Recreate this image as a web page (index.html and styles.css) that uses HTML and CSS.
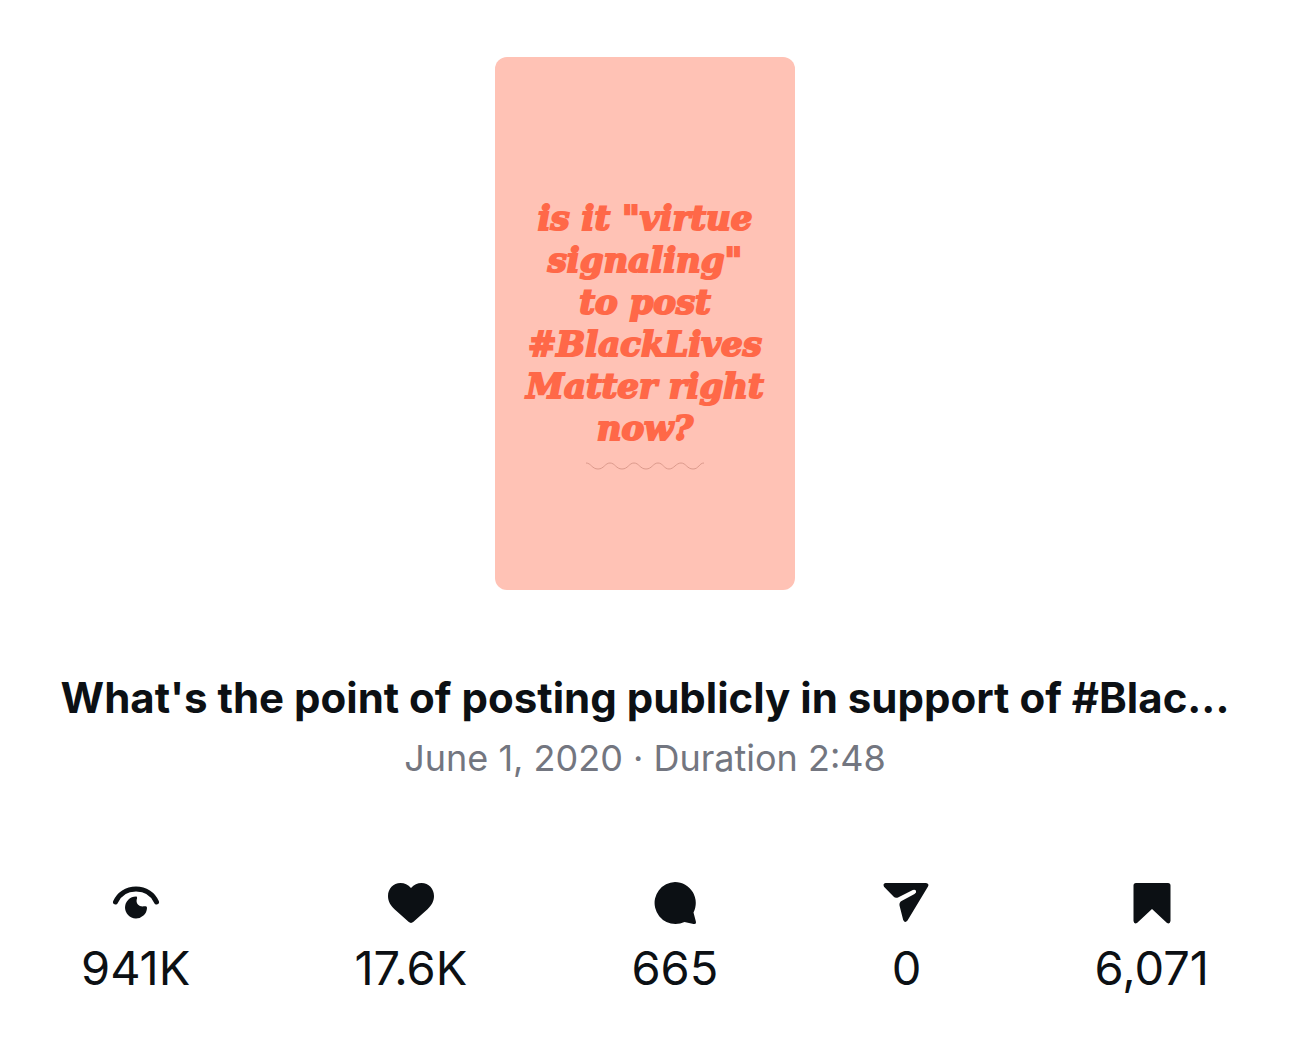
FILE: index.html
```html
<!DOCTYPE html>
<html lang="en">
<head>
  <meta charset="utf-8">
  <meta name="viewport" content="width=device-width, initial-scale=1">
  <title>Video insights</title>
  <link rel="stylesheet" href="styles.css">
</head>
<body>
  <main class="insights">
    <figure class="cover">
      <p class="cover-text">is it "virtue<br>signaling"<br>to post<br>#BlackLives<br>Matter right<br>now?</p>
      <svg class="cover-wave" viewBox="0 0 120 10" aria-hidden="true">
        <path d="M1 2C6 2 7 8 13 8S20 2 25 2S31 8 37 8S44 2 49 2S55 8 61 8S68 2 73 2S79 8 84 8S91 2 96 2S102 8 108 8S114 2 119 2"/>
      </svg>
    </figure>
    <header class="summary">
      <h1 class="title">What's the point of posting publicly in support of #Blac...</h1>
      <p class="meta">June 1, 2020 · Duration 2:48</p>
    </header>
    <ul class="stats">
      <li class="stat">
        <svg class="icon" viewBox="0 0 48 48" role="img" aria-label="Views">
          <path class="stroke" d="M3.500 22C7 14 14.500 9 24 9S41 14 44.500 22"/>
          <path d="M24 16.500C25 16 25.500 17.500 24.700 19.500C23.800 23.500 27 26.500 30.500 26.500C33 26.300 35 26 35 28A11 11 0 1 1 24 16.500Z"/>
        </svg>
        <span>941K</span>
      </li>
      <li class="stat">
        <svg class="icon" viewBox="0 0 48 48" role="img" aria-label="Likes">
          <path d="M24 8C27 4.500 30.500 3 34.500 3C41.800 3 47 8.800 47 16C47 21.500 44.500 25.500 40.500 29.200L26.500 41.800Q24 44 21.500 41.800L7.500 29.200C3.500 25.500 1 21.500 1 16C1 8.800 6.200 3 13.500 3C17.500 3 21 4.500 24 8Z"/>
        </svg>
        <span>17.6K</span>
      </li>
      <li class="stat">
        <svg class="icon" viewBox="0 0 48 48" role="img" aria-label="Comments">
          <path d="M24 2A21 21 0 1 0 33.500 42L42.500 44Q45.700 44.500 44.800 41.200L42.500 32.500A21 21 0 0 0 24 2Z"/>
        </svg>
        <span>665</span>
      </li>
      <li class="stat">
        <svg class="icon" viewBox="0 0 48 48" role="img" aria-label="Shares">
          <path d="M3.500 3H44Q47.500 3.500 46 6.500L25.500 40.500Q23 43.500 21.200 40L17.500 25.500Q17 22.500 19.500 21L32.500 14Q34.800 12.500 34 10.800Q33 9.200 30.800 10L16.500 17.200Q13.500 18.500 11.500 16.500L2 6.800Q0.500 3.500 3.500 3Z"/>
        </svg>
        <span>0</span>
      </li>
      <li class="stat">
        <svg class="icon" viewBox="0 0 48 48" role="img" aria-label="Saves">
          <path d="M8 3H40Q42.500 3 42.500 5.500V41Q42 44.500 39 43L24 29L9 43Q6 44.500 5.500 41V5.500Q5.500 3 8 3Z"/>
        </svg>
        <span>6,071</span>
      </li>
    </ul>
  </main>
</body>
</html>
```
FILE: styles.css
```css
* {
  box-sizing: border-box;
}

body {
  margin: 0;
  background: #fff;
  color: #0c1014;
  font-family: Inter, "Liberation Sans", sans-serif;
}

.insights {
  padding: 57px 48px 48px;
}

.cover {
  display: flex;
  flex-direction: column;
  align-items: center;
  justify-content: center;
  gap: 12px;
  width: 300px;
  aspect-ratio: 9 / 16;
  margin: 0 auto;
  padding-top: 20px;
  border-radius: 12px;
  background: #ffc2b5;
}

.cover-text {
  margin: 0;
  color: #ff6848;
  font: italic 700 34px/42px "DejaVu Serif", serif;
  text-align: center;
  white-space: nowrap;
  -webkit-text-stroke: 2px #ff6848;
}

.cover-wave {
  width: 120px;
  height: 10px;
  fill: none;
  stroke: #dc9a8c;
}

.summary {
  margin-top: 80px;
  text-align: center;
}

.title {
  margin: 0;
  overflow: hidden;
  font-size: 42px;
  font-weight: 700;
  line-height: 56px;
  text-overflow: ellipsis;
  white-space: nowrap;
}

.meta {
  margin: 8px 0 0;
  color: #737680;
  font-size: 36px;
  line-height: 48px;
}

.stats {
  display: flex;
  justify-content: space-between;
  margin: 98px 0 0;
  padding: 0 33px;
  list-style: none;
}

.stat {
  display: flex;
  flex-direction: column;
  align-items: center;
  gap: 12px;
  font-size: 47px;
  line-height: 56px;
}

.icon {
  width: 48px;
  height: 48px;
  fill: #0c1014;
}

.stroke {
  fill: none;
  stroke: #0c1014;
  stroke-width: 5;
  stroke-linecap: round;
}
```
